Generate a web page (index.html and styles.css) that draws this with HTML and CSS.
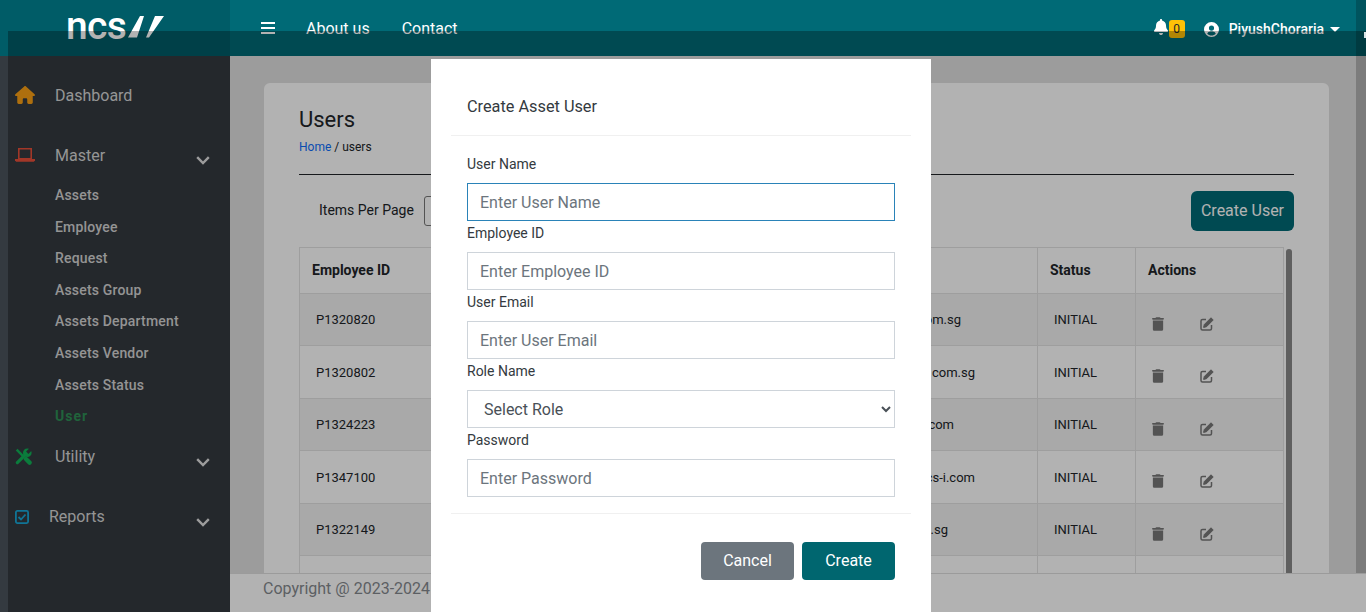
FILE: index.html
```html
<!DOCTYPE html>
<html>
<head>
  <meta charset="UTF-8">
  <title>Users</title>
  <link rel="stylesheet" href="styles.css">
</head>
<body>
  <div class="app">
    <div class="topbar">
      <div class="brand">
        <span class="logo-text">ncs</span>
        <svg class="logo-slash" width="36" height="22" viewBox="0 0 36 22"><path fill="#fff" d="M0 21.500 12 0h4L9 21.500zM18 21.500 27 0h9L21 21.500z"/></svg>
      </div>
      <div class="topnav">
        <svg class="burger" width="14" height="12" viewBox="0 0 14 12"><path fill="#fff" d="M0 0h14v2H0zM0 5h14v2H0zM0 10h14v2H0z"/></svg>
        <a class="toplink">About us</a>
        <a class="toplink">Contact</a>
      </div>
      <div class="topright">
        <span class="bell">
          <svg width="14" height="16" viewBox="0 0 448 512"><path fill="#fff" d="M224 0c-18 0-32 14-32 32v19C119 66 64 131 64 208v19c0 47-17 92-48 127l-7 8c-8 9-10 23-5 34s16 19 29 19h384c13 0 24-8 29-19s3-25-5-34l-7-8c-31-35-48-80-48-127v-19c0-77-55-142-128-157V32c0-18-14-32-32-32zm45 493c12-12 19-28 19-45H160c0 17 7 33 19 45s28 19 45 19 33-7 45-19z"/></svg>
          <span class="badge">0</span>
        </span>
        <svg class="user-ico" width="15" height="15" viewBox="0 0 512 512"><path fill="#fff" d="M256 0a256 256 0 1 0 0 512 256 256 0 1 0 0-512zm0 120a88 88 0 1 1 0 176 88 88 0 1 1 0-176zm0 344c-58 0-110-25-146-64 17-45 60-72 106-72h80c46 0 89 27 106 72-36 39-88 64-146 64z"/></svg>
        <span class="username">PiyushChoraria</span>
        <span class="caret"></span>
      </div>
    </div>

    <div class="body-row">
      <div class="sidebar">
        <div class="nav-main nav-dash">
          <svg class="nav-ico" width="20" height="18" viewBox="0 0 576 512"><path fill="#f9a015" d="M575 256c0 18-15 32-32 32h-32l1 160c0 3 0 5 0 8v16c0 22-18 40-40 40h-16c-1 0-2 0-3 0-1 0-3 0-4 0h-57c-22 0-40-18-40-40v-88c0-18-14-32-32-32h-64c-18 0-32 14-32 32v88c0 22-18 40-40 40h-56c-1 0-3 0-4 0-1 0-2 0-3 0h-16c-22 0-40-18-40-40V352c0-1 0-2 0-3v-61H32c-18 0-32-14-32-32 0-9 3-17 10-24L266 8c7-7 15-8 22-8s15 2 21 7l255 225c8 7 12 15 11 24z"/></svg>
          <span class="nav-label">Dashboard</span>
        </div>
        <div class="nav-main nav-master">
          <svg class="nav-ico" width="20" height="14" viewBox="0 0 20 14"><path fill="none" stroke="#e8503a" stroke-width="1.600" d="M3.800.8h12.400v10H3.800z"/><path fill="#e8503a" d="M0 11h20v1.400l-1.200 1.400H1.200L0 12.400z"/></svg>
          <span class="nav-label">Master</span>
          <svg class="chev" width="14" height="9" viewBox="0 0 14 9"><path fill="none" stroke="#e0e0e0" stroke-width="2.400" d="M1.200 1.200 7 7l5.800-5.800"/></svg>
        </div>
        <ul class="subnav">
          <li>Assets</li>
          <li>Employee</li>
          <li>Request</li>
          <li>Assets Group</li>
          <li>Assets Department</li>
          <li>Assets Vendor</li>
          <li>Assets Status</li>
          <li class="active">User</li>
        </ul>
        <div class="nav-main nav-util">
          <svg class="nav-ico" width="17" height="17" viewBox="0 0 512 512">
            <path fill="none" stroke="#10b256" stroke-width="72" d="M50 50 280 280"/>
            <path fill="none" stroke="#10b256" stroke-width="130" stroke-linecap="round" d="M330 330 440 440"/>
            <path fill="none" stroke="#10b256" stroke-width="96" stroke-linecap="round" d="M70 442 300 212"/>
            <circle cx="370" cy="142" r="130" fill="#10b256"/>
            <path fill="#343a40" d="M335 107 405 177 535 47 465-23z"/>
          </svg>
          <span class="nav-label">Utility</span>
          <svg class="chev" width="14" height="9" viewBox="0 0 14 9"><path fill="none" stroke="#e0e0e0" stroke-width="2.400" d="M1.200 1.200 7 7l5.800-5.800"/></svg>
        </div>
        <div class="nav-main nav-reports">
          <svg class="nav-ico" width="14" height="14" viewBox="0 0 14 14"><rect x=".9" y=".9" width="12.200" height="12.200" rx="1.500" fill="none" stroke="#17a8d8" stroke-width="1.800"/><path fill="none" stroke="#17a8d8" stroke-width="1.800" d="m3.500 7 2.500 2.500 4.500-5"/></svg>
          <span class="nav-label">Reports</span>
          <svg class="chev" width="14" height="9" viewBox="0 0 14 9"><path fill="none" stroke="#e0e0e0" stroke-width="2.400" d="M1.200 1.200 7 7l5.800-5.800"/></svg>
        </div>
      </div>

      <div class="main">
        <div class="card">
          <h2 class="page-title">Users</h2>
          <div class="crumb"><a>Home</a> / users</div>
          <hr class="rule">
          <div class="tools">
            <span class="per-page">Items Per Page</span>
            <span class="per-box"></span>
            <button class="btn-create-user">Create User</button>
          </div>
          <div class="table-wrap">
            <table class="users">
              <thead>
                <tr><th class="c1">Employee ID</th><th class="c2"></th><th class="c3">Status</th><th class="c4">Actions</th></tr>
              </thead>
              <tbody>
                <tr class="odd"><td>P1320820</td><td class="mail m1">om.sg</td><td>INITIAL</td><td class="acts"><svg class="ico-del" width="12" height="14" viewBox="0 0 448 512"><path d="M135 18C140 7 151 0 164 0h120c13 0 24 7 29 18l7 14h96c18 0 32 14 32 32s-14 32-32 32H32C14 96 0 82 0 64s14-32 32-32h96zM32 128h384v320c0 35-29 64-64 64H96c-35 0-64-29-64-64z"/></svg><svg class="ico-edit" width="14" height="14" viewBox="0 0 14 14"><path fill="none" stroke-width="1.500" d="M6 2.500H2.500a1.500 1.500 0 0 0-1.500 1.500v7.500A1.500 1.500 0 0 0 2.500 13H10a1.500 1.500 0 0 0 1.500-1.500V8"/><path d="M11 .8 13.200 3l-6.700 6.700-2.900.7.700-2.900z"/></svg></td></tr>
                <tr><td>P1320802</td><td class="mail m2">com.sg</td><td>INITIAL</td><td class="acts"><svg class="ico-del" width="12" height="14" viewBox="0 0 448 512"><path d="M135 18C140 7 151 0 164 0h120c13 0 24 7 29 18l7 14h96c18 0 32 14 32 32s-14 32-32 32H32C14 96 0 82 0 64s14-32 32-32h96zM32 128h384v320c0 35-29 64-64 64H96c-35 0-64-29-64-64z"/></svg><svg class="ico-edit" width="14" height="14" viewBox="0 0 14 14"><path fill="none" stroke-width="1.500" d="M6 2.500H2.500a1.500 1.500 0 0 0-1.500 1.500v7.500A1.500 1.500 0 0 0 2.500 13H10a1.500 1.500 0 0 0 1.500-1.500V8"/><path d="M11 .8 13.200 3l-6.700 6.700-2.900.7.700-2.900z"/></svg></td></tr>
                <tr class="odd"><td>P1324223</td><td class="mail m3">com</td><td>INITIAL</td><td class="acts"><svg class="ico-del" width="12" height="14" viewBox="0 0 448 512"><path d="M135 18C140 7 151 0 164 0h120c13 0 24 7 29 18l7 14h96c18 0 32 14 32 32s-14 32-32 32H32C14 96 0 82 0 64s14-32 32-32h96zM32 128h384v320c0 35-29 64-64 64H96c-35 0-64-29-64-64z"/></svg><svg class="ico-edit" width="14" height="14" viewBox="0 0 14 14"><path fill="none" stroke-width="1.500" d="M6 2.500H2.500a1.500 1.500 0 0 0-1.500 1.500v7.500A1.500 1.500 0 0 0 2.500 13H10a1.500 1.500 0 0 0 1.500-1.500V8"/><path d="M11 .8 13.200 3l-6.700 6.700-2.900.7.700-2.900z"/></svg></td></tr>
                <tr><td>P1347100</td><td class="mail m2">cs-i.com</td><td>INITIAL</td><td class="acts"><svg class="ico-del" width="12" height="14" viewBox="0 0 448 512"><path d="M135 18C140 7 151 0 164 0h120c13 0 24 7 29 18l7 14h96c18 0 32 14 32 32s-14 32-32 32H32C14 96 0 82 0 64s14-32 32-32h96zM32 128h384v320c0 35-29 64-64 64H96c-35 0-64-29-64-64z"/></svg><svg class="ico-edit" width="14" height="14" viewBox="0 0 14 14"><path fill="none" stroke-width="1.500" d="M6 2.500H2.500a1.500 1.500 0 0 0-1.500 1.500v7.500A1.500 1.500 0 0 0 2.500 13H10a1.500 1.500 0 0 0 1.500-1.500V8"/><path d="M11 .8 13.200 3l-6.700 6.700-2.900.7.700-2.900z"/></svg></td></tr>
                <tr class="odd"><td>P1322149</td><td class="mail m5">s.sg</td><td>INITIAL</td><td class="acts"><svg class="ico-del" width="12" height="14" viewBox="0 0 448 512"><path d="M135 18C140 7 151 0 164 0h120c13 0 24 7 29 18l7 14h96c18 0 32 14 32 32s-14 32-32 32H32C14 96 0 82 0 64s14-32 32-32h96zM32 128h384v320c0 35-29 64-64 64H96c-35 0-64-29-64-64z"/></svg><svg class="ico-edit" width="14" height="14" viewBox="0 0 14 14"><path fill="none" stroke-width="1.500" d="M6 2.500H2.500a1.500 1.500 0 0 0-1.500 1.500v7.500A1.500 1.500 0 0 0 2.500 13H10a1.500 1.500 0 0 0 1.500-1.500V8"/><path d="M11 .8 13.200 3l-6.700 6.700-2.900.7.700-2.900z"/></svg></td></tr>
                <tr class="last"><td></td><td></td><td></td><td></td></tr>
              </tbody>
            </table>
            <div class="thumb"></div>
          </div>
        </div>
      </div>
    </div>
  </div>

  <div class="backdrop"></div>
  <div class="backdrop-edge"></div>
  <div class="edge-tick"></div>
  <div class="footer">Copyright @ 2023-2024</div>

  <div class="modal">
    <div class="modal-head">Create Asset User</div>
    <div class="modal-body">
      <label class="lbl">User Name</label>
      <input class="field focus" placeholder="Enter User Name">
      <label class="lbl">Employee ID</label>
      <input class="field" placeholder="Enter Employee ID">
      <label class="lbl">User Email</label>
      <input class="field" placeholder="Enter User Email">
      <label class="lbl">Role Name</label>
      <select class="field pick"><option>Select Role</option></select>
      <label class="lbl">Password</label>
      <input class="field" placeholder="Enter Password">
    </div>
    <div class="modal-foot">
      <button class="btn grey">Cancel</button>
      <button class="btn teal">Create</button>
    </div>
  </div>
</body>
</html>
```
FILE: styles.css
```css
* { box-sizing: border-box; }
html, body { margin: 0; height: 612px; overflow: hidden; }
body { font-family: Roboto, "Liberation Sans", sans-serif; color: #212529; background: #e0e0e0; position: relative; }

.app { width: 1366px; height: 612px; display: flex; flex-direction: column; position: relative; }

/* top bar */
.topbar { height: 56px; background: #006a76; display: flex; align-items: center; color: #fff; flex: none; }
.brand { width: 230px; height: 56px; background: #005c67; display: flex; padding: 16px 0 0 66px; gap: 3px; }
.logo-text { font: 500 39px/20px Roboto, sans-serif; color: #fff; letter-spacing: -.7px; width: 59px; height: 22px; }
.topnav { display: flex; align-items: center; padding-left: 31px; }
.burger { margin-right: 31px; }
.toplink { font-size: 16px; margin-right: 32px; }
.topright { margin-left: auto; display: flex; align-items: center; padding: 2px 26px 0 0; }
.bell { display: flex; align-items: flex-start; margin: -2px 19px 0 -1px; }
.badge { width: 16px; height: 18px; background: #ffc107; color: #212529; border-radius: 3px; font-size: 12px; line-height: 18px; text-align: center; margin-left: 1px; margin-top: 1px; }
.user-ico { margin-right: 10px; }
.username { font-size: 14px; font-weight: 500; }
.caret { width: 0; height: 0; border: 5px solid transparent; border-top-color: #fff; border-bottom: 0; margin-left: 6px; }

/* sidebar */
.body-row { flex: 1; display: flex; min-height: 0; }
.sidebar { width: 230px; flex: none; background: #343a40; color: #d6d6d6; padding-top: 26px; }
.nav-main { display: flex; align-items: center; position: relative; font-size: 16px; height: 26px; padding-left: 15px; }
.nav-ico { flex: none; }
.nav-label { margin-left: 20px; }
.nav-dash { margin-bottom: 34px; }
.nav-util { margin-top: 11px; margin-bottom: 34px; }
.nav-util .nav-label { margin-left: 23px; }
.chev { position: absolute; left: 196px; top: 14px; }
.subnav { list-style: none; margin: 12px 0 0; padding: 0 0 0 55px; font-size: 14px; font-weight: 500; letter-spacing: .18px; }
.subnav li { height: 31.6px; line-height: 31.6px; color: #d4d4d4; }
.subnav li.active { color: #2f8f55; font-weight: 700; letter-spacing: 1px; }

/* page */
.main { flex: 1; min-width: 0; padding: 27px 37px 0 34px; overflow: hidden; }
.card { background: #fff; border-radius: 6px 6px 0 0; height: 600px; padding: 24px 35px; }
.page-title { font-size: 22px; font-weight: 400; margin: 0; line-height: 26px; }
.crumb { font-size: 12px; line-height: 14px; margin-top: 7px; }
.crumb a { color: #0d6efd; }
.rule { border: 0; border-top: 1px solid #212529; margin: 20px 0 0; }
.tools { display: flex; align-items: center; height: 72px; padding: 0 0 0 20px; font-size: 14px; }
.per-page { margin: 0 10px 2px 0; }
.per-box { width: 60px; height: 30px; border: 1px solid #777; border-radius: 3px; }
.btn-create-user { margin-left: auto; background: #006a76; color: #fff; border: 0; border-radius: 6px; height: 40px; width: 103px; padding: 0 0 2px; font: 16px Roboto, sans-serif; }

.table-wrap { display: flex; align-items: flex-start; gap: 2px; }
.users { width: 984px; flex: none; border-collapse: collapse; font-size: 13px; table-layout: fixed; }
.users th, .users td { border: 1px solid #e2e2e2; padding: 0 16px; text-align: left; white-space: nowrap; }
.users th { font-size: 14px; height: 46px; font-weight: 700; padding: 0 12px 2px; }
.users td { height: 53px; vertical-align: middle; }
.users tr.odd td { background: #f2f2f2; height: 52px; }
.users tr.last td { height: 30px; }
.c1 { width: 369px; }
.c2 { width: 369px; }
.c3 { width: 98px; }
.c4 { width: 148px; }
.users td.mail { text-align: right; }
.users td.m1 { padding-right: 76px; }
.users td.m2 { padding-right: 62px; }
.users td.m3 { padding-right: 83px; }
.users td.m5 { padding-right: 89px; }
.acts svg { fill: #777; stroke: #777; vertical-align: middle; margin-top: 8px; }
.acts .ico-del { stroke: none; margin-right: 36px; }
.thumb { width: 6px; height: 330px; background: #888; border-radius: 3px; margin-top: 2px; }

/* overlays */
.backdrop { position: absolute; left: 8px; top: 31px; width: 1358px; height: 581px; background: rgba(0,0,0,.3); }
.backdrop-edge { position: absolute; left: 1356px; top: 0; width: 10px; height: 573px; background: rgba(0,0,0,.2); }
.edge-tick { position: absolute; left: 1364px; top: 32px; width: 2px; height: 6px; background: #d8e4e6; }
.footer { position: absolute; left: 230px; right: 0; top: 573px; height: 39px; background: #b2b2b2; border-top: 1px solid #9b9b9b; font-size: 16px; color: #5c5f63; padding: 5px 0 0 33px; }
.modal { position: absolute; left: 431px; top: 59px; width: 500px; height: 553px; background: #fff; padding: 0 20px; }
.modal-head { height: 77px; padding: 38px 16px 0; font-size: 16.3px; line-height: 20px; color: #343a40; border-bottom: 1px solid #f0f0f0; }
.modal-body { padding: 18px 16px 0; height: 378px; border-bottom: 1px solid #f0f0f0; }
.lbl { display: block; font-size: 14px; line-height: 21px; height: 21px; margin-bottom: 8px; color: #343a40; }
.field { display: block; width: 428px; height: 38px; border: 1px solid #ced4da; font: 16px Roboto, sans-serif; padding: 0 12px; color: #495057; background: #fff; margin-bottom: 2px; border-radius: 0; outline: 0; }
.field::placeholder { color: #6c757d; }
.field.focus { border-color: #2a83b8; }
.modal-foot { display: flex; justify-content: flex-end; gap: 8px; padding: 28px 16px 0 0; }
.btn { height: 38px; border: 0; border-radius: 4px; color: #fff; font: 16px Roboto, sans-serif; padding: 0 0 2px; }
.grey { width: 93px; background: #6c757d; }
.teal { width: 93px; background: #00666f; }
```
